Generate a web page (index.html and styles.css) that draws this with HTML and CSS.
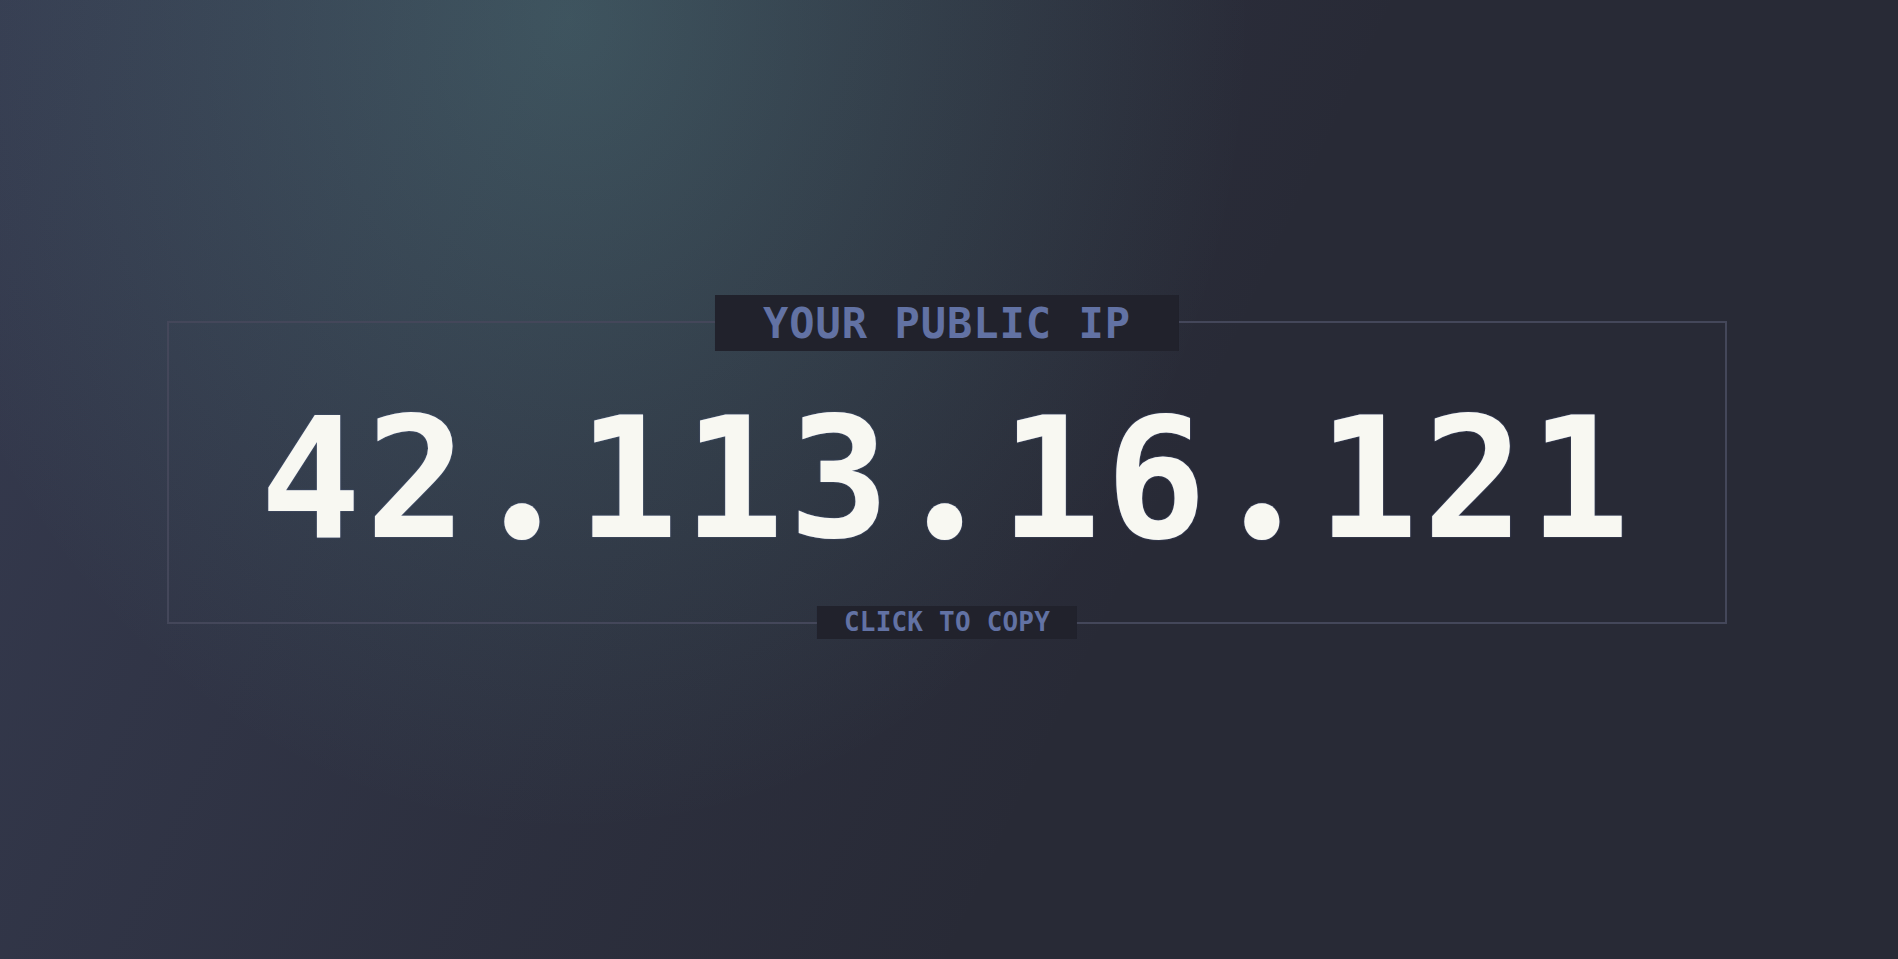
FILE: index.html
```html
<!DOCTYPE html>
<html lang="en">
<head>
<meta charset="utf-8">
<title>Your Public IP</title>
<link rel="stylesheet" href="styles.css">
</head>
<body>
<main class="page">
  <section class="ip-card">
    <div class="ip-card__title">YOUR PUBLIC IP</div>
    <div class="ip-card__value">42<span class="ip-card__dot">.</span>113<span class="ip-card__dot">.</span>16<span class="ip-card__dot">.</span>121</div>
    <div class="ip-card__hint">CLICK TO COPY</div>
  </section>
</main>
</body>
</html>
```
FILE: styles.css
```css
html, body {
  margin: 0;
  padding: 0;
  height: 100%;
}

body {
  background-color: #282a36;
  background-image:
    radial-gradient(ellipse 36% 85% at 30% 2%, rgba(121, 215, 200, 0.2) 0%, rgba(121, 215, 200, 0.085) 55%, rgba(121, 215, 200, 0) 100%),
    linear-gradient(115deg, rgba(98, 114, 164, 0.23) 0%, rgba(98, 114, 164, 0.07) 40%, rgba(98, 114, 164, 0) 60%);
  font-family: "DejaVu Sans Mono", "Liberation Mono", monospace;
  overflow: hidden;
}

.page {
  box-sizing: border-box;
  height: 100vh;
  padding: 321px 4px 0 0;
}

.ip-card {
  position: relative;
  box-sizing: border-box;
  width: 1560px;
  margin: 0 auto;
  border: 2px solid #44475a;
  padding: 72px 0 59px;
  text-align: center;
  cursor: pointer;
}

.ip-card__value {
  font-size: 168px;
  line-height: 1;
  font-weight: bold;
  letter-spacing: 4.6px;
  color: #f8f8f2;
  text-shadow: 0 0 1.5px rgba(98, 114, 164, 0.9);
  white-space: nowrap;
}

.ip-card__dot {
  display: inline-block;
  width: 101px;
  line-height: 0;
  text-align: center;
  letter-spacing: 0;
  margin-right: 4.6px;
  font-family: "Noto Sans CJK SC", "Noto Sans", sans-serif;
  font-size: 1.14em;
}

.ip-card__title {
  position: absolute;
  top: -28px;
  left: 50%;
  transform: translateX(-50%);
  background: #21222c;
  color: #6272a4;
  font-size: 42px;
  line-height: 55px;
  font-weight: bold;
  letter-spacing: 1px;
  padding: 1px 48px 0;
  white-space: nowrap;
}

.ip-card__hint {
  position: absolute;
  bottom: -17px;
  left: 50%;
  transform: translateX(-50%);
  background: #21222c;
  color: #6272a4;
  font-size: 26px;
  line-height: 33px;
  font-weight: bold;
  letter-spacing: 0.2px;
  padding: 0 27px;
  white-space: nowrap;
}
```
